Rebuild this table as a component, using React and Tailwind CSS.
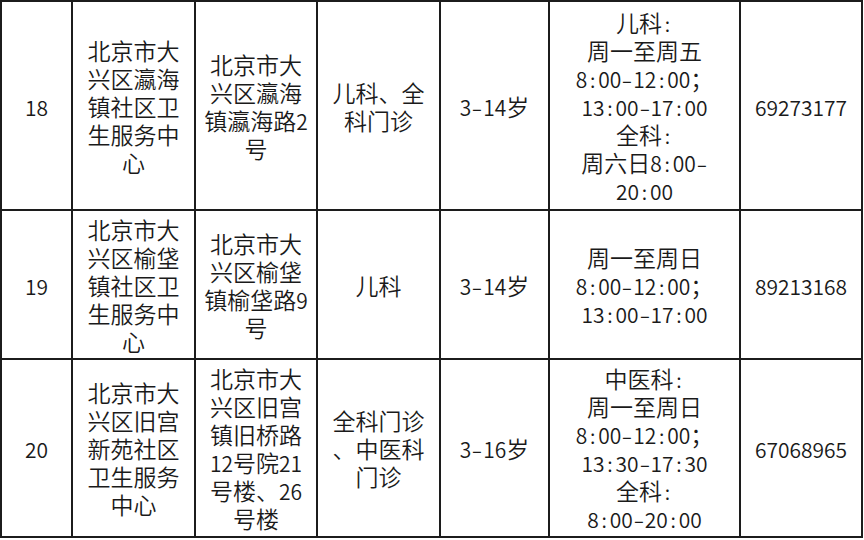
import React from "react";

const rows = [
  {
    h: "h-[207px]",
    cells: [
      ["18"],
      ["北京市大", "兴区瀛海", "镇社区卫", "生服务中", "心"],
      ["北京市大", "兴区瀛海", "镇瀛海路2", "号"],
      ["儿科、全", "科门诊"],
      ["3-14岁"],
      ["儿科:", "周一至周五", "8:00-12:00；", "13:00-17:00", "全科:", "周六日8:00-", "20:00"],
      ["69273177"],
    ],
  },
  {
    h: "h-[147px]",
    cells: [
      ["19"],
      ["北京市大", "兴区榆垡", "镇社区卫", "生服务中", "心"],
      ["北京市大", "兴区榆垡", "镇榆垡路9", "号"],
      ["儿科"],
      ["3-14岁"],
      ["周一至周日", "8:00-12:00；", "13:00-17:00"],
      ["89213168"],
    ],
  },
  {
    h: "h-[176px]",
    cells: [
      ["20"],
      ["北京市大", "兴区旧宫", "新苑社区", "卫生服务", "中心"],
      ["北京市大", "兴区旧宫", "镇旧桥路", "12号院21", "号楼、26", "号楼"],
      ["全科门诊", "、中医科", "门诊"],
      ["3-16岁"],
      ["中医科:", "周一至周日", "8:00-12:00；", "13:30-17:30", "全科:", "8:00-20:00"],
      ["67068965"],
    ],
  },
];

function Line({ text }) {
  const parts = [];
  let buf = "";
  let kind = null;
  const flush = () => {
    if (buf) parts.push({ kind, text: buf });
    buf = "";
  };
  for (const ch of text) {
    let k;
    if (/[0-9A-Za-z]/.test(ch)) k = "d";
    else if (ch === ":") k = "c";
    else if (ch === "-") k = "h";
    else k = "z";
    if (k === "c" || k === "h") {
      flush();
      parts.push({ kind: k, text: ch });
      kind = null;
      continue;
    }
    if (k !== kind) {
      flush();
      kind = k;
    }
    buf += ch;
  }
  flush();
  return (
    <div className="h-[28px] leading-[28px]">
      {parts.map((p, i) => {
        if (p.kind === "d")
          return (
            <span key={i} className="text-[21px]">
              {p.text}
            </span>
          );
        if (p.kind === "c")
          return (
            <span key={i} className="inline-block w-[11px] text-center text-[20px]">
              {p.text}
            </span>
          );
        if (p.kind === "h")
          return (
            <span key={i} className="inline-block w-[12px] text-center text-[21px] scale-x-[1.5]">
              {p.text}
            </span>
          );
        return <span key={i}>{p.text}</span>;
      })}
    </div>
  );
}

export default function App() {
  return (
    <div className="w-[864px] h-[540px] bg-white overflow-hidden">
      <div
        className="w-[863px] bg-[#1c1c1c] grid grid-cols-[69px_121px_120px_121px_107px_189px_120px] gap-[2px] p-[2px] text-[#1a1a1a] text-[23px] font-[350]"
        style={{ fontFamily: '"Noto Sans CJK SC", "Noto Sans", sans-serif' }}
      >
        {rows.map((r, ri) =>
          r.cells.map((c, ci) => (
            <div
              key={ri + "-" + ci}
              className={`${r.h} bg-white flex flex-col items-center justify-center text-center whitespace-nowrap`}
            >
              {c.map((line, li) => (
                <Line key={li} text={line} />
              ))}
            </div>
          ))
        )}
      </div>
    </div>
  );
}
